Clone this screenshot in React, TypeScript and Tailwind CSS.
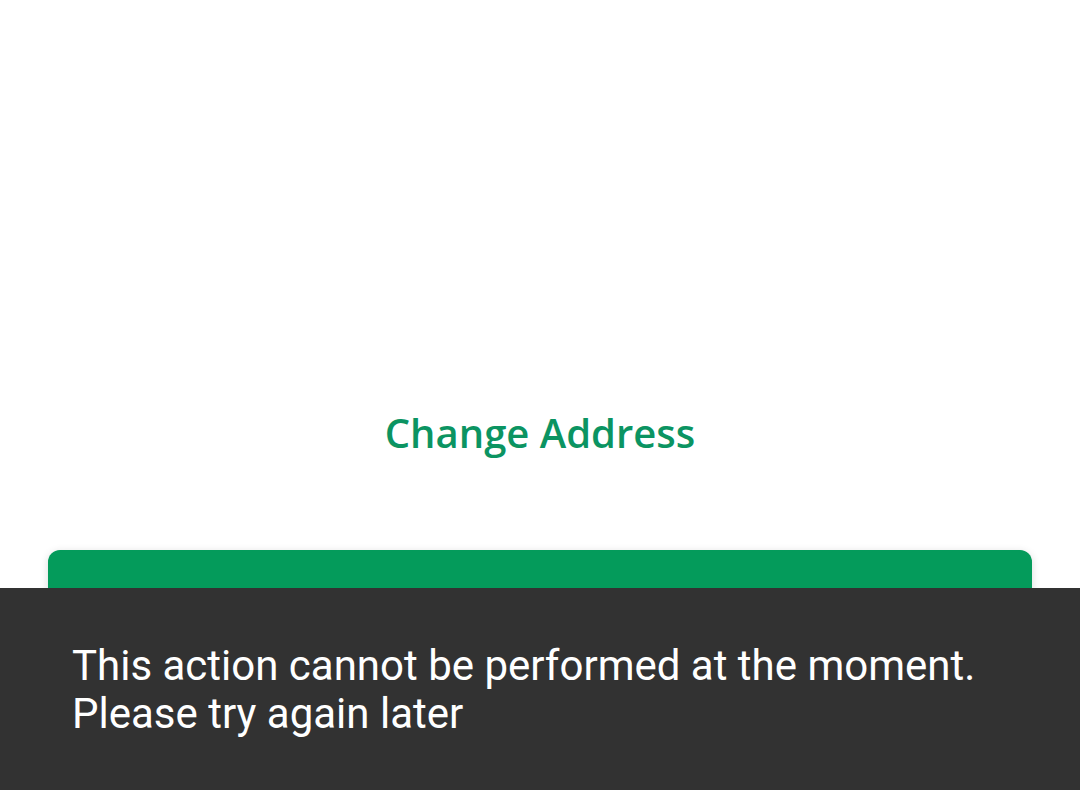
import React from "react";

const App: React.FC = () => {
    return (
        <div className="relative h-[790px] w-[1080px] overflow-hidden bg-white">
            <div className="flex flex-col items-center pt-[408px]">
                <button className="text-[40px] font-semibold text-[#0b9462] leading-[50px]"
                    style={{ fontFamily: "'Open Sans', sans-serif" }}>
                    Change Address
                </button>
                <div className="mt-[92px] w-[984px] h-[140px] rounded-[12px] bg-[#049b5b] shadow-[0_2px_8px_rgba(0,0,0,0.15)]" />
            </div>

            {/* snackbar */}
            <div className="absolute bottom-0 left-0 right-0 h-[202px] bg-[#323232] px-[72px]">
                <p className="pt-[54px] text-[42px] leading-[48px] text-white"
                    style={{ fontFamily: "Roboto, sans-serif" }}>
                    This action cannot be performed at the moment.
                    <br />
                    Please try again later
                </p>
            </div>
        </div>
    );
};

export default App;
